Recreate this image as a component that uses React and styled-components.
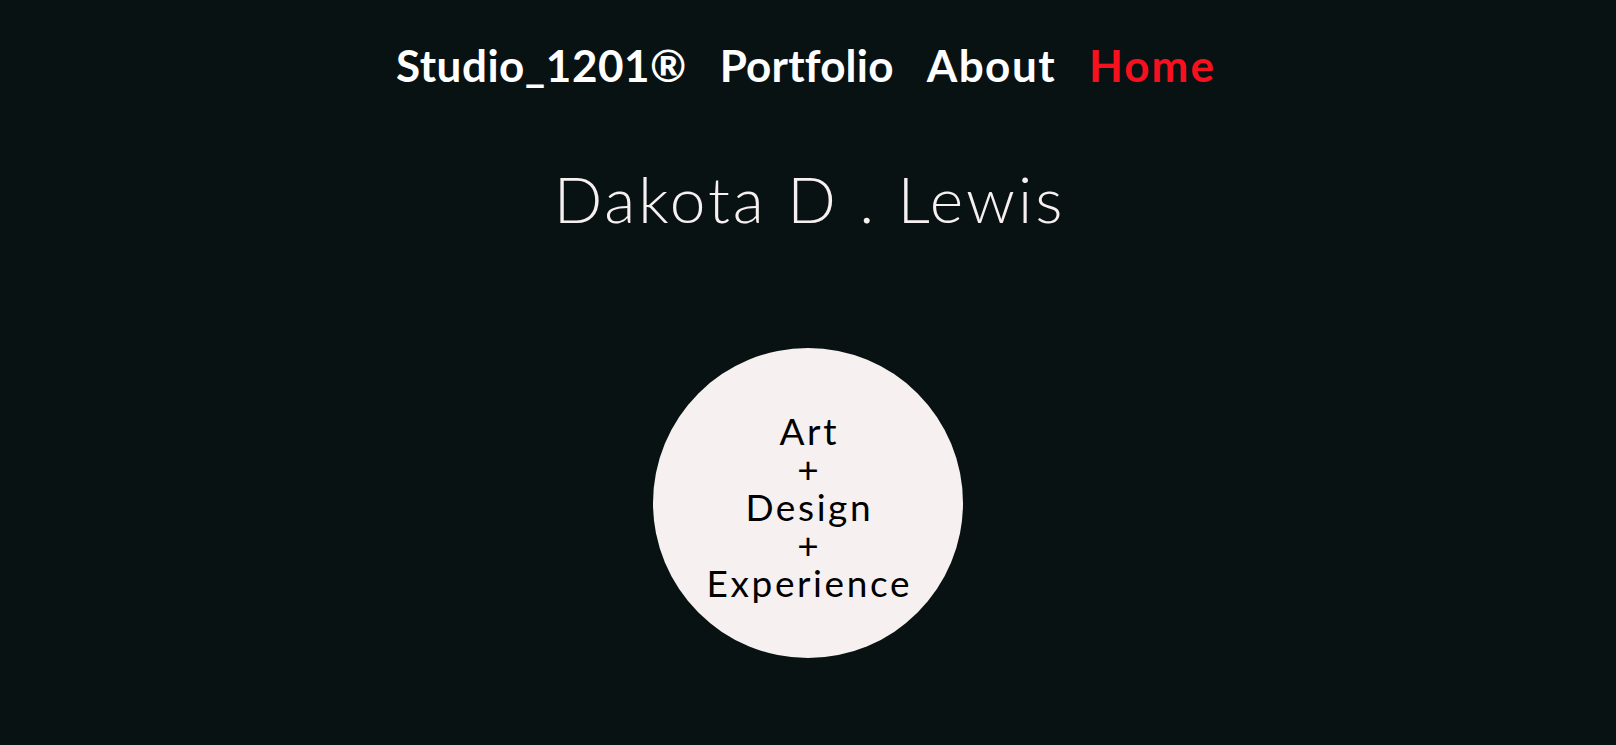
import React from "react";
import styled, { createGlobalStyle } from "styled-components";

const Global = createGlobalStyle`
  html, body {
    margin: 0;
    padding: 0;
    background: #081213;
  }
  body {
    font-family: "Lato", "Liberation Sans", sans-serif;
  }
`;

const Page = styled.div`
  min-height: 745px;
  display: flex;
  flex-direction: column;
  align-items: center;
  padding-top: 43px;
  box-sizing: border-box;
`;

const Nav = styled.nav`
  display: flex;
  align-items: baseline;
  gap: 33px;
  margin-left: -4px;
`;

const NavLink = styled.a`
  font-family: "Lato", "Liberation Sans", sans-serif;
  font-weight: 700;
  font-size: 44px;
  line-height: 1;
  letter-spacing: ${(p) => p.$ls || "0.5px"};
  color: ${(p) => (p.$active ? "#f7101d" : "#ffffff")};
  text-decoration: none;
  cursor: pointer;
`;

const Title = styled.h1`
  margin: 80px 0 0;
  padding-left: 3px;
  font-family: "Lato", "Liberation Sans", sans-serif;
  font-weight: 300;
  font-size: 64px;
  line-height: 1;
  color: #f6f0f0;
  letter-spacing: 3px;
`;

const Circle = styled.div`
  margin-top: 117px;
  width: 310px;
  height: 310px;
  border-radius: 50%;
  background: #f6f0f0;
  display: flex;
  flex-direction: column;
  align-items: center;
  justify-content: center;
  padding-top: 7px;
  box-sizing: border-box;
`;

const Line = styled.div`
  font-family: "Lato", "Liberation Sans", sans-serif;
  font-weight: 400;
  font-size: 37px;
  line-height: 38px;
  letter-spacing: 2.6px;
  padding-left: 2.6px;
  color: #000000;
  text-align: center;
`;

export default function App() {
  return (
    <>
      <Global />
      <Page>
        <Nav>
          <NavLink>Studio_1201®</NavLink>
          <NavLink $ls="0.2px">Portfolio</NavLink>
          <NavLink $ls="1.5px">About</NavLink>
          <NavLink $ls="2px" $active>Home</NavLink>
        </Nav>
        <Title>Dakota D . Lewis</Title>
        <Circle>
          <Line>Art</Line>
          <Line>+</Line>
          <Line>Design</Line>
          <Line>+</Line>
          <Line>Experience</Line>
        </Circle>
      </Page>
    </>
  );
}
